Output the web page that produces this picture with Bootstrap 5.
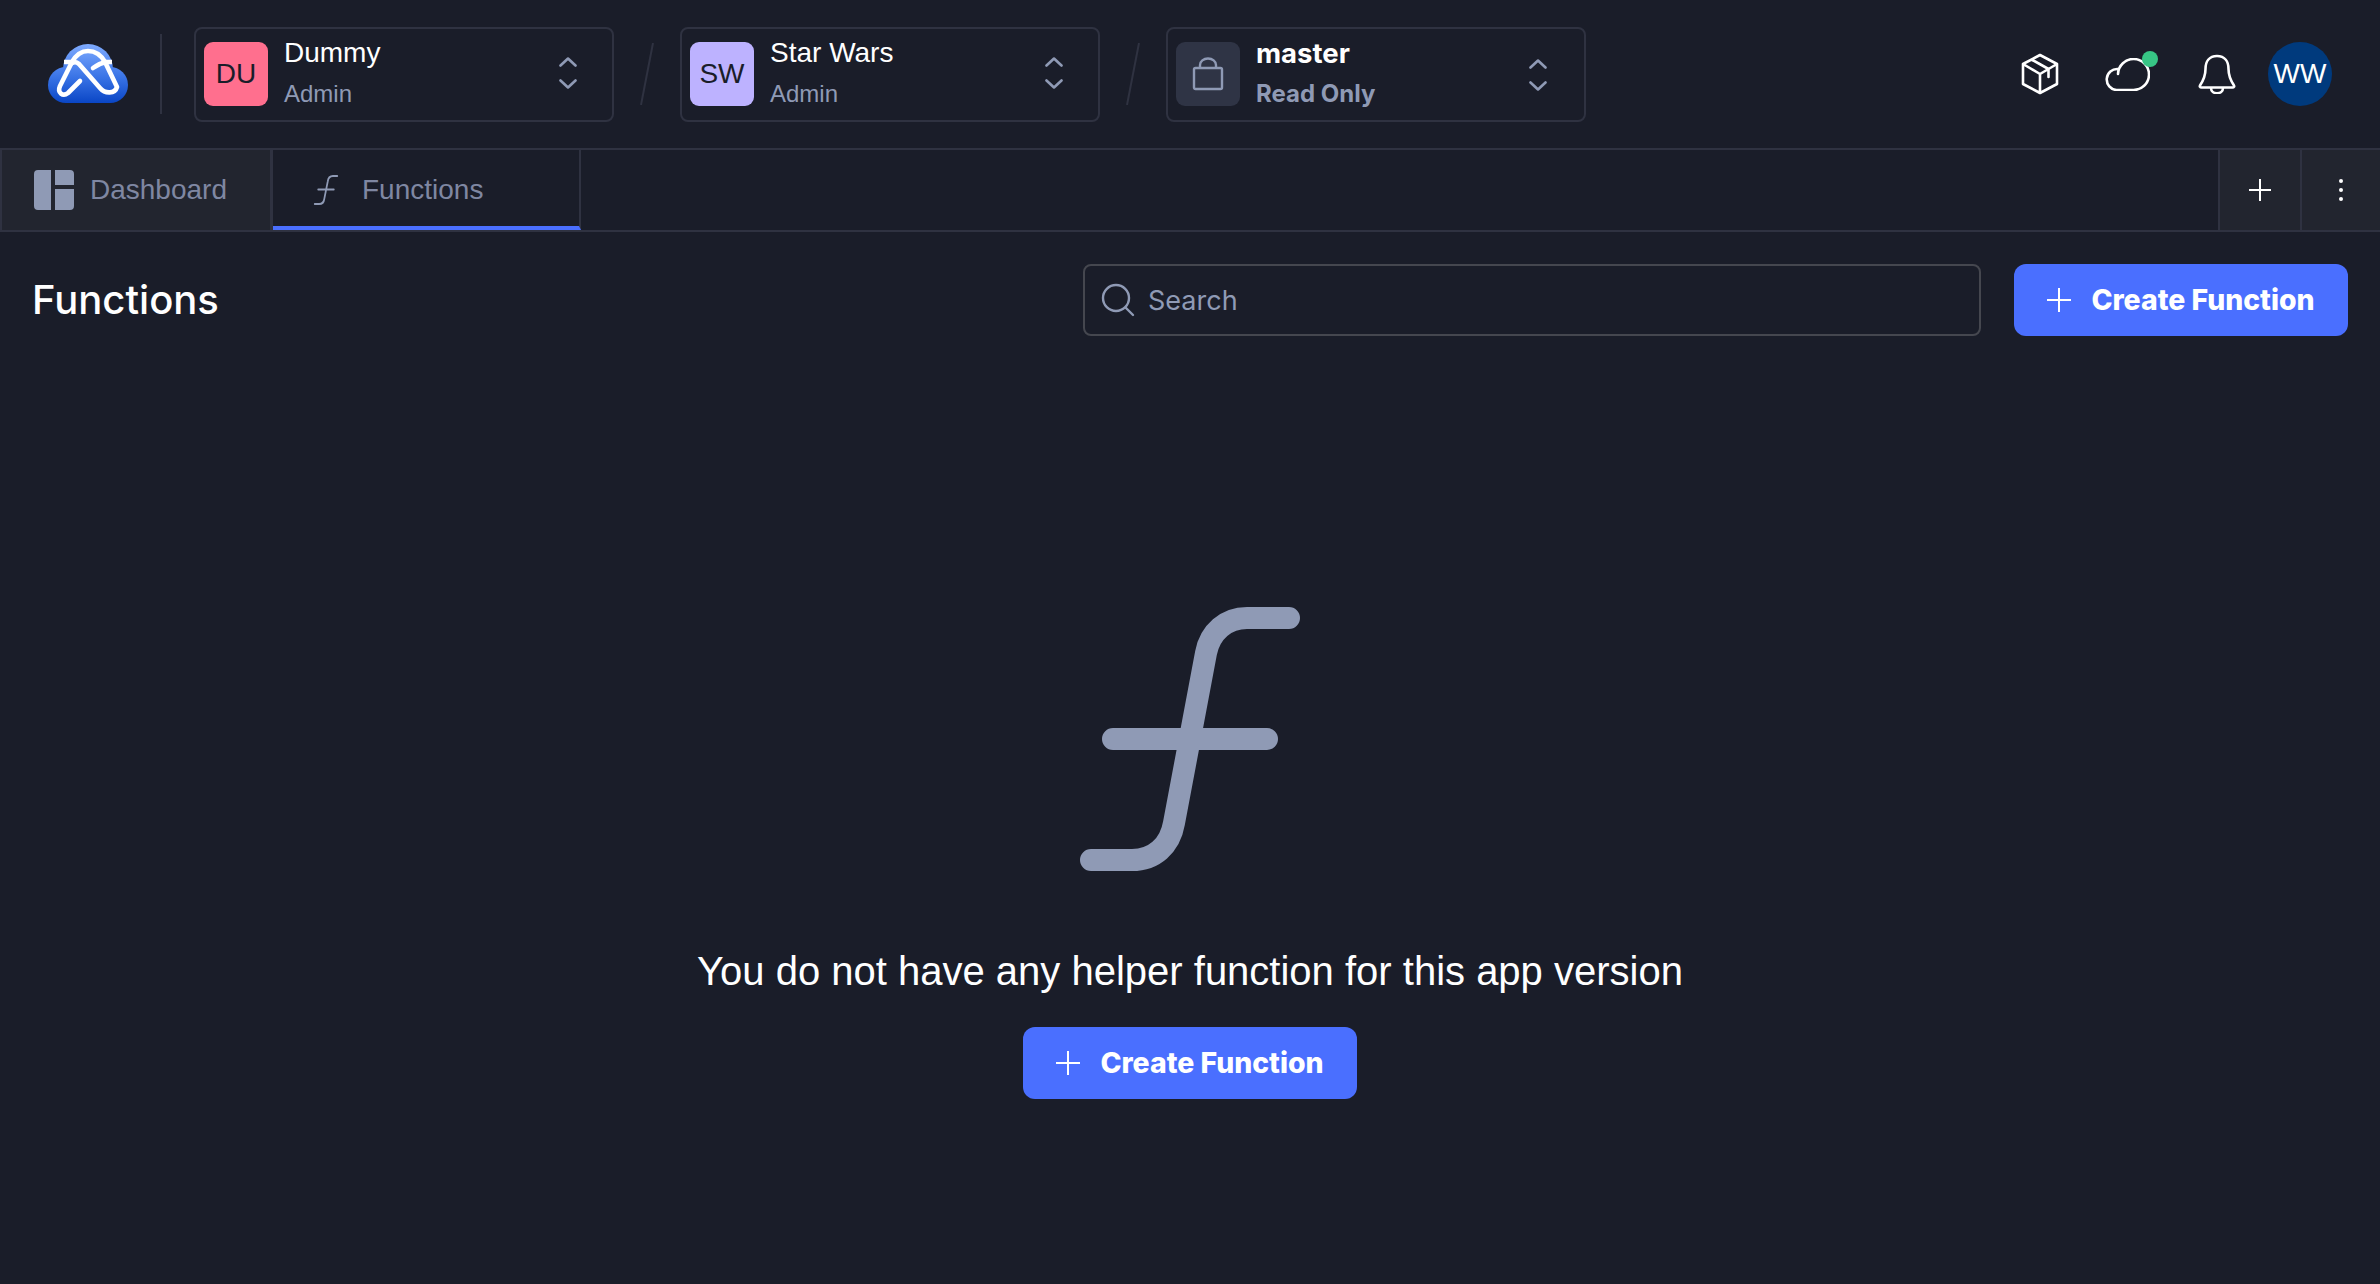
<!DOCTYPE html>
<html lang="en">
  <head>
    <meta charset="UTF-8" />
    <meta name="viewport" content="width=device-width, initial-scale=1.0" />
    <title>Functions</title>
    <link href="https://cdn.jsdelivr.net/npm/bootstrap@5.3.0/dist/css/bootstrap.min.css" rel="stylesheet" />
    <style>
      :root {
        --bg: #1a1d29;
        --line: #2f3241;
        --raised: #22252f;
        --muted: #8f9ab5;
        --tab-text: #7f87a2;
        --accent: #4a6fff;
      }

      body {
        min-height: 100vh;
        background: var(--bg);
        color: #fff;
        font-family: "Liberation Sans", Arial, sans-serif;
        overflow: hidden;
      }

      .top-bar {
        height: 148px;
        padding: 0 48px;
      }

      .brand-logo {
        width: 80px;
        height: 60px;
      }

      .brand-sep {
        width: 2px;
        height: 80px;
        margin: 0 32px;
        background: var(--line);
      }

      .switcher {
        width: 420px;
        height: 95px;
        padding: 0 35px 0 8px;
        border: 2px solid var(--line);
        border-radius: 8px;
      }

      .switcher-tile {
        width: 64px;
        height: 64px;
        border-radius: 9px;
        color: var(--bg);
        font-size: 28px;
      }

      .tile-pink { background: #ff6f8e; }
      .tile-violet { background: #bdb2ff; }
      .tile-slate { background: #2f3445; }

      .switcher-text {
        margin-left: 16px;
        margin-top: -2px;
        line-height: 40px;
      }

      .switcher-name { font-size: 28px; }
      .switcher-role { font-size: 24px; color: var(--muted); margin-top: 1px; }

      .switcher-arrows { margin-top: -2px; }

      .switcher-bold { padding-right: 37px; }
      .switcher-bold .switcher-arrows { margin-top: 2px; }

      .switcher-bold .switcher-name,
      .switcher-bold .switcher-role {
        font-family: Inter, sans-serif;
        font-weight: 700;
      }

      .switcher-bold .switcher-name { font-size: 27.500px; }

      .crumb-slash {
        width: 14px;
        height: 62px;
        margin: 0 26px;
      }

      .status-dot {
        position: absolute;
        top: -7px;
        right: -8px;
        width: 16px;
        height: 16px;
        border-radius: 50%;
        background: #37c585;
      }

      .user-avatar {
        width: 64px;
        height: 64px;
        margin-left: 32px;
        background: #003a7d;
        font-size: 28px;
      }

      .cloud-wrap {
        height: 33px;
        margin-left: 45px;
      }

      .bell-icon { margin-left: 48px; }

      .tab-strip {
        height: 84px;
        border-top: 2px solid var(--line);
        border-bottom: 2px solid var(--line);
      }

      .tab-item {
        height: 100%;
        font-size: 28px;
        color: var(--tab-text);
        border-right: 2px solid var(--line);
      }

      .tab-home {
        width: 273px;
        padding-left: 32px;
        gap: 16px;
        background: var(--raised);
        border-left: 2px solid var(--line);
        border-right-width: 3px;
      }

      .tab-current {
        width: 308px;
        padding-left: 40px;
        gap: 23px;
        border-bottom: 4px solid var(--accent);
        padding-top: 4px;
      }

      .tab-tool {
        height: 100%;
        background: var(--raised);
        border-left: 2px solid var(--line);
      }

      .tab-add { width: 82px; }
      .tab-more { width: 80px; }

      .page-body { padding: 32px 32px 0; }

      .page-title {
        font-family: Inter, sans-serif;
        font-size: 40px;
        font-weight: 500;
        margin: 0;
      }

      .search-box {
        width: 898px;
        height: 72px;
        padding: 0 16px;
        margin-right: 33px;
        border: 2px solid #45474f;
        border-radius: 8px;
      }

      .search-box input {
        height: 100%;
        margin-left: 13px;
        padding: 0;
        border: 0;
        outline: 0;
        background: transparent;
        color: #fff;
        font-family: Inter, sans-serif;
        font-size: 27px;
        flex: 1;
      }

      .search-box input::placeholder { color: var(--muted); opacity: 1; }

      .btn-create {
        width: 334px;
        height: 72px;
        gap: 20px;
        padding: 0;
        background: var(--accent);
        border: 0;
        border-radius: 12px;
        color: #fff;
        font-family: Inter, sans-serif;
        font-size: 28.400px;
        font-weight: 800;
      }

      .btn-create:hover { background: var(--accent); color: #fff; }

      .empty-state { margin-top: 254px; }

      .empty-text {
        margin: 57px 0 32px;
        font-size: 40px;
        line-height: 48px;
      }
    </style>
  </head>
  <body>
    <header class="top-bar d-flex align-items-center">
      <svg class="brand-logo flex-shrink-0" viewBox="0 0 80 60">
        <defs>
          <linearGradient id="cloudFill" gradientUnits="userSpaceOnUse" x1="0" y1="0" x2="0" y2="60">
            <stop offset="0" stop-color="#7fabff" />
            <stop offset="0.55" stop-color="#3a74e6" />
            <stop offset="1" stop-color="#0844c4" />
          </linearGradient>
        </defs>
        <g fill="url(#cloudFill)">
          <circle cx="40" cy="25" r="25" />
          <circle cx="18" cy="41" r="18" />
          <circle cx="62" cy="41" r="18" />
          <rect x="18" y="30" width="44" height="29" />
        </g>
        <g fill="none" stroke="#fff" stroke-width="4.6" stroke-linecap="round" stroke-linejoin="round">
          <path d="M16 18 H24 C28 11 34 7 40 7 C47 7 53 11 57 18 H64" stroke-linecap="butt" />
          <path d="M23 20 L12 42 C9 49 15 53 20 49 L32 37" />
          <path d="M24 19 C27 17 29 18 31 20 L52 44 C57 50 67 50 69 43 L58 20" />
          <path d="M45 24 C49 21 53 19 58 18" />
        </g>
      </svg>
      <div class="brand-sep flex-shrink-0"></div>

      <div class="switcher d-flex align-items-center flex-shrink-0">
        <div class="switcher-tile tile-pink d-flex align-items-center justify-content-center">DU</div>
        <div class="switcher-text">
          <div class="switcher-name">Dummy</div>
          <div class="switcher-role">Admin</div>
        </div>
        <svg class="switcher-arrows ms-auto" width="18" height="32" viewBox="0 0 18 32" fill="none" stroke="#8f9ab5" stroke-width="2.6" stroke-linecap="round" stroke-linejoin="round"><path d="M1.5 8.5 9 1.5l7.5 7M1.5 23.5 9 30.5l7.5-7" /></svg>
      </div>

      <svg class="crumb-slash flex-shrink-0" viewBox="0 0 14 62"><path d="M13 0 1 62" stroke="#2f3241" stroke-width="2" /></svg>

      <div class="switcher d-flex align-items-center flex-shrink-0">
        <div class="switcher-tile tile-violet d-flex align-items-center justify-content-center">SW</div>
        <div class="switcher-text">
          <div class="switcher-name">Star Wars</div>
          <div class="switcher-role">Admin</div>
        </div>
        <svg class="switcher-arrows ms-auto" width="18" height="32" viewBox="0 0 18 32" fill="none" stroke="#8f9ab5" stroke-width="2.6" stroke-linecap="round" stroke-linejoin="round"><path d="M1.5 8.5 9 1.5l7.5 7M1.5 23.5 9 30.5l7.5-7" /></svg>
      </div>

      <svg class="crumb-slash flex-shrink-0" viewBox="0 0 14 62"><path d="M13 0 1 62" stroke="#2f3241" stroke-width="2" /></svg>

      <div class="switcher switcher-bold d-flex align-items-center flex-shrink-0">
        <div class="switcher-tile tile-slate d-flex align-items-center justify-content-center">
          <svg width="32" height="34" viewBox="0 0 32 34" fill="none" stroke="#8f9ab5" stroke-width="2.4"><path d="M8 11V8a8 6.5 0 0 1 16 0v3" /><rect x="2" y="11" width="28" height="21" rx="1.5" /></svg>
        </div>
        <div class="switcher-text">
          <div class="switcher-name">master</div>
          <div class="switcher-role">Read Only</div>
        </div>
        <svg class="switcher-arrows ms-auto" width="18" height="32" viewBox="0 0 18 32" fill="none" stroke="#8f9ab5" stroke-width="2.6" stroke-linecap="round" stroke-linejoin="round"><path d="M1.5 8.5 9 1.5l7.5 7M1.5 23.5 9 30.5l7.5-7" /></svg>
      </div>

      <div class="ms-auto d-flex align-items-center">
        <svg width="40" height="42" viewBox="0 0 40 42" fill="none" stroke="#fff" stroke-width="2.6" stroke-linejoin="round" stroke-linecap="round"><path d="M20 2 37 11V31L20 40 3 31V11ZM3 11 20 21 37 11M20 21V40M11.5 6.500 28.500 16V24" /></svg>
        <div class="cloud-wrap position-relative">
          <svg class="d-block" width="45" height="33" viewBox="0 0 45 33" fill="none" stroke="#fff" stroke-width="2.6" stroke-linecap="round" stroke-linejoin="round"><path d="M13 11A10.500 10.500 0 0 0 11.500 32H28A15.500 15.500 0 1 0 13 16" /></svg>
          <span class="status-dot"></span>
        </div>
        <svg class="bell-icon" width="38" height="40" viewBox="0 0 38 40" fill="none" stroke="#fff" stroke-width="2.6" stroke-linejoin="round" stroke-linecap="round"><path d="M19 2C11 2 7.500 8 7.500 15 7.500 23 5 27 2 31.500 1.500 32.500 2 33.500 3.500 33.500H34.500C36 33.500 36.500 32.500 36 31.500 33 27 30.500 23 30.500 15 30.500 8 27 2 19 2ZM13 34C13 41 25 41 25 34" /></svg>
        <div class="user-avatar rounded-circle d-flex align-items-center justify-content-center">WW</div>
      </div>
    </header>

    <nav class="tab-strip d-flex align-items-center">
      <div class="tab-item tab-home d-flex align-items-center">
        <svg width="40" height="40" viewBox="0 0 40 40" fill="#8f9ab5"><path d="M4 0H17V40H4A4 4 0 0 1 0 36V4A4 4 0 0 1 4 0ZM21 0H36A4 4 0 0 1 40 4V15H21ZM21 19H40V36A4 4 0 0 1 36 40H21Z" /></svg>
        <span>Dashboard</span>
      </div>
      <div class="tab-item tab-current d-flex align-items-center">
        <svg width="26" height="30" viewBox="0 0 300 300" preserveAspectRatio="none" fill="none" stroke="#8f9ab5" stroke-width="20" stroke-linecap="round"><path d="M280 10H230C195 10 175 30 170 65L130 240C125 275 100 290 70 290H20M60 145H240" /></svg>
        <span>Functions</span>
      </div>
      <div class="tab-tool tab-add ms-auto d-flex align-items-center justify-content-center">
        <svg width="22" height="22" viewBox="0 0 22 22" stroke="#fff" stroke-width="2"><path d="M0 11H22M11 0V22" /></svg>
      </div>
      <div class="tab-tool tab-more d-flex align-items-center justify-content-center">
        <svg width="6" height="24" viewBox="0 0 6 24" fill="#fff"><circle cx="3" cy="3" r="2" /><circle cx="3" cy="12" r="2" /><circle cx="3" cy="21" r="2" /></svg>
      </div>
    </nav>

    <main class="page-body">
      <div class="d-flex align-items-center">
        <h1 class="page-title">Functions</h1>
        <div class="search-box ms-auto d-flex align-items-center">
          <svg width="34" height="34" viewBox="0 0 34 34" fill="none" stroke="#8f9ab5" stroke-width="2.4" stroke-linecap="round"><circle cx="15" cy="15" r="13" /><path d="M24.500 24.500 32 32" /></svg>
          <input type="text" placeholder="Search" />
        </div>
        <button class="btn btn-create d-flex align-items-center justify-content-center" type="button">
          <svg width="24" height="24" viewBox="0 0 24 24" stroke="#fff" stroke-width="2"><path d="M0 12H24M12 0V24" /></svg>
          Create Function
        </button>
      </div>

      <div class="empty-state d-flex flex-column align-items-center">
        <svg class="d-block" width="300" height="300" viewBox="0 0 300 300" fill="none" stroke="#8f9ab5" stroke-width="22" stroke-linecap="round"><path d="M249 28H207C186 28 170 42 166 63L134 233C130 256 114 270 92 270H51M73 149H227" /></svg>
        <p class="empty-text">You do not have any helper function for this app version</p>
        <button class="btn btn-create d-flex align-items-center justify-content-center" type="button">
          <svg width="24" height="24" viewBox="0 0 24 24" stroke="#fff" stroke-width="2"><path d="M0 12H24M12 0V24" /></svg>
          Create Function
        </button>
      </div>
    </main>

    <script src="https://cdn.jsdelivr.net/npm/bootstrap@5.3.0/dist/js/bootstrap.bundle.min.js"></script>
  </body>
</html>
